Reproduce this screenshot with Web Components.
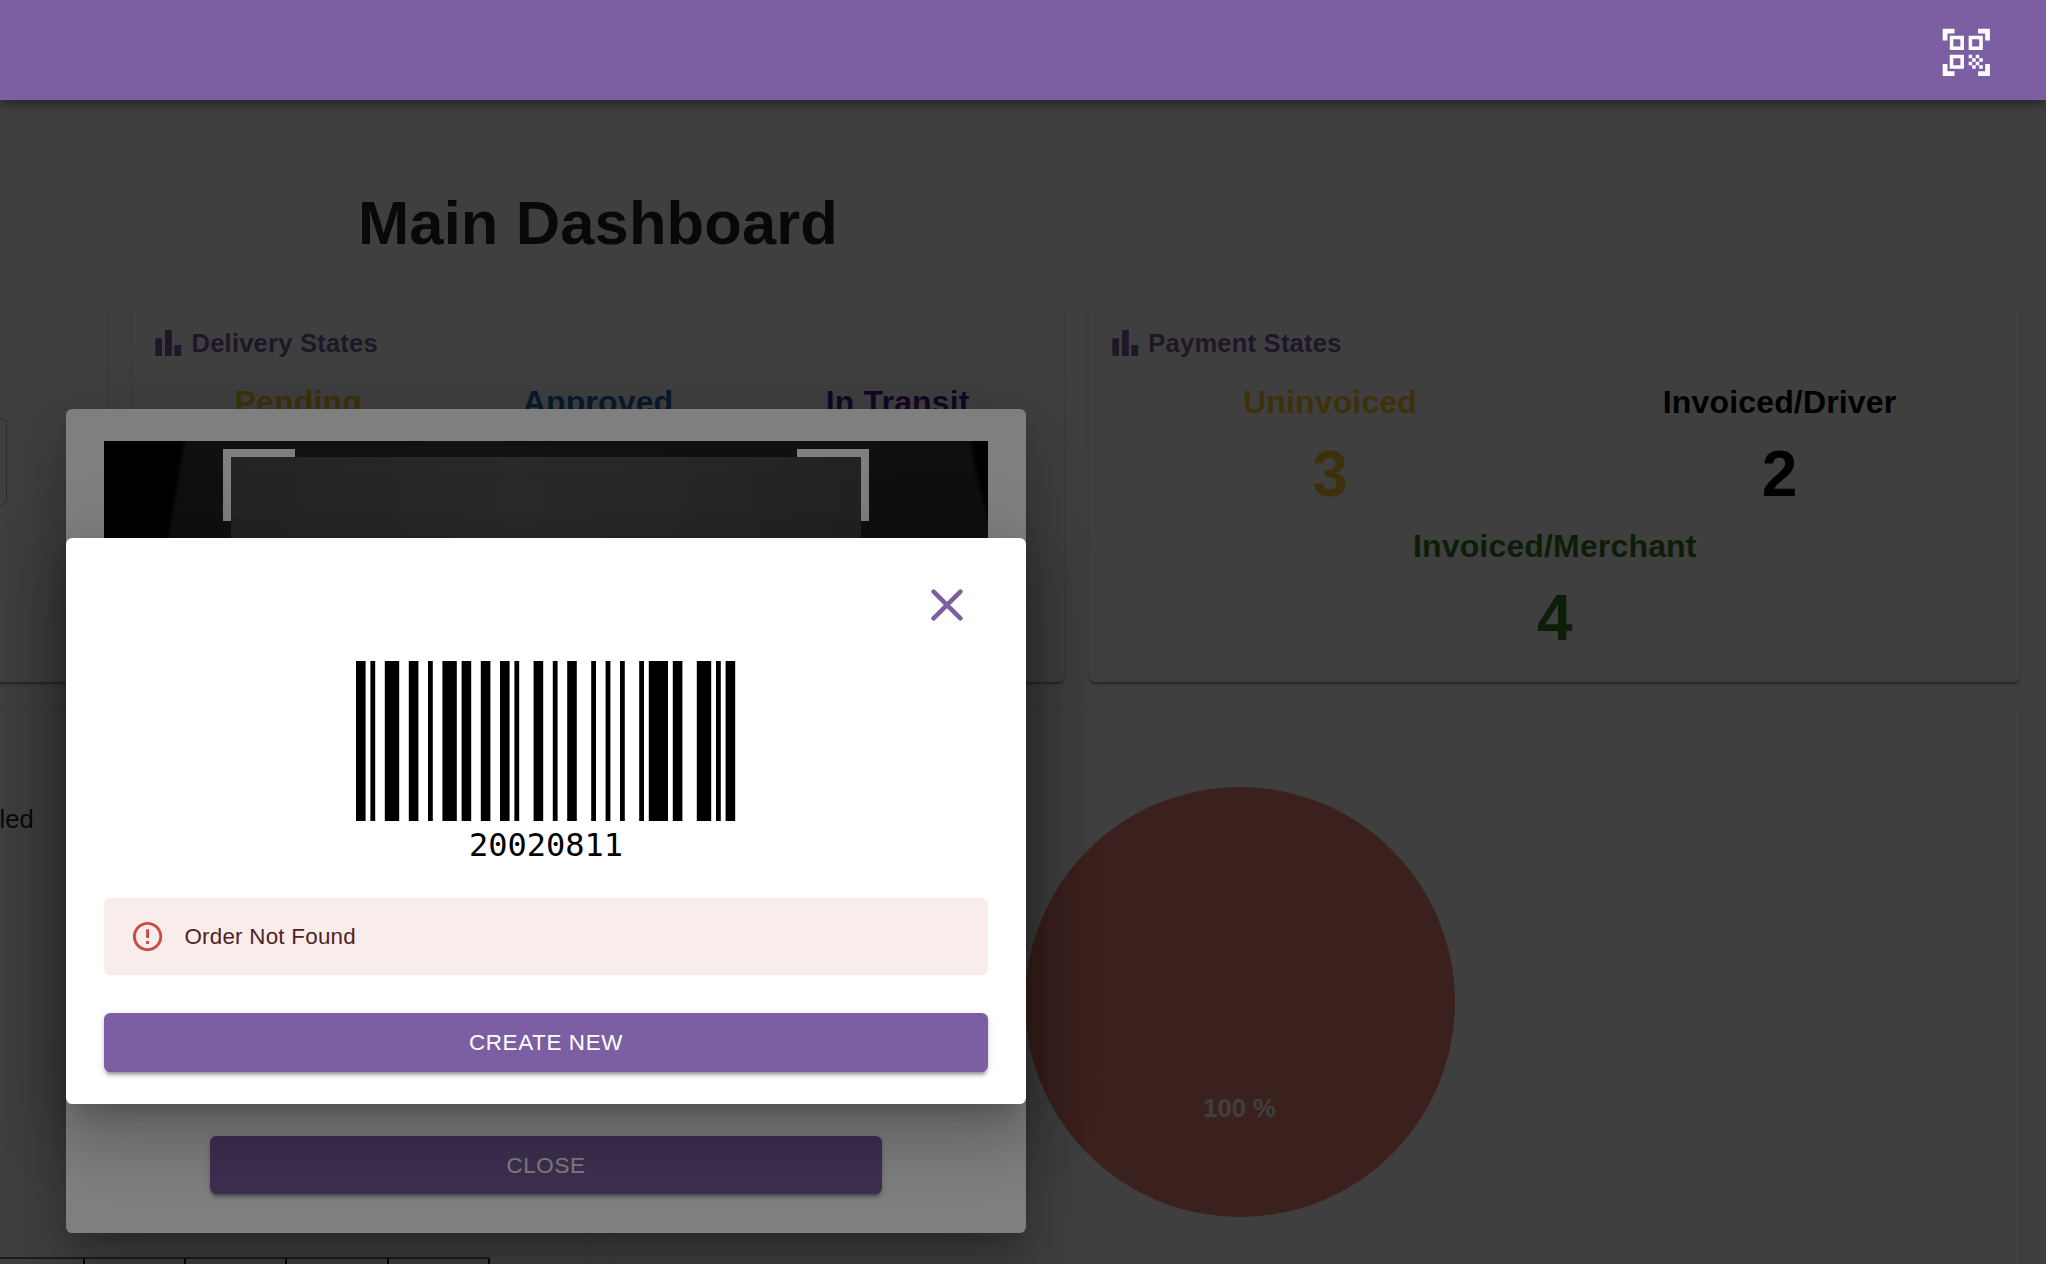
<!DOCTYPE html>
<html lang="en">
<head>
<meta charset="utf-8">
<title>Main Dashboard</title>
<style>
html,body{margin:0;height:100%;overflow:hidden}
body{font-family:"Liberation Sans",Arial,sans-serif;background:#fff}
</style>
</head>
<body>
<dash-app></dash-app>
<script>
const define = (name, html) => customElements.define(name, class extends HTMLElement {
  constructor() {
    super();
    this.attachShadow({ mode: 'open' }).innerHTML = typeof html === 'function' ? html(this) : html;
  }
});

define('app-bar', `<style>
:host{display:flex;align-items:center;justify-content:flex-end;position:relative;z-index:10;height:100px;box-sizing:border-box;padding:4px 51.500px 0 0;background:#7c5fa2;
box-shadow:0 3.2px 6.4px -1.6px rgba(0,0,0,.2),0 6.4px 8px 0 rgba(0,0,0,.14),0 1.6px 16px 0 rgba(0,0,0,.12)}
svg{width:56.6px;height:56.6px;fill:#fff;display:block}
</style>
<svg viewBox="0 0 24 24"><path d="M9.5 6.5v3h-3v-3h3M11 5H5v6h6V5zm-1.500 9.500v3h-3v-3h3M11 13H5v6h6v-6zm6.500-6.500v3h-3v-3h3M19 5h-6v6h6V5zm-6 8h1.500v1.500H13V13zm1.500 1.500H16V16h-1.500v-1.500zM16 13h1.500v1.500H16V13zm-3 3h1.500v1.500H13V16zm1.500 1.500H16V19h-1.500v-1.500zM16 16h1.500v1.500H16V16zm1.500-1.500H19V16h-1.500v-1.500zm0 3H19V19h-1.500v-1.500zM22 7h-2V4h-3V2h5v5zm0 15v-5h-2v3h-3v2h5zM2 22h5v-2H4v-3H2v5zM2 2v5h2V4h3V2H2z"/></svg>`);

define('paper-card', `<style>
:host{display:block;box-sizing:border-box;flex:1 1 0;min-width:0;background:#fff;border-radius:6.4px;
box-shadow:0 3.2px 1.6px -1.6px rgba(0,0,0,.2),0 1.6px 1.6px 0 rgba(0,0,0,.14),0 1.6px 4.8px 0 rgba(0,0,0,.12)}
</style><slot></slot>`);

define('card-heading', `<style>
:host{display:flex;align-items:center;gap:4px;height:38px;margin:0 0 14px .700px;color:#7c5fa2;font:bold 25.6px/38px "Liberation Sans",Arial,sans-serif;letter-spacing:.0075em}
svg{width:38.4px;height:38px;fill:currentColor;flex:none}
</style>
<svg viewBox="0 0 38.4 38"><path d="M6.300 14.200h6.700v17.800h-6.700zM16 6h6.800v26H16zM25.400 21h6.800v11h-6.800z"/></svg><span><slot></slot></span>`);

define('stat-item', el => `<style>
:host{display:flex;flex-direction:column;align-items:center;font-weight:bold;letter-spacing:.01em}
.l{font-size:32px;line-height:52px}.n{font-size:64px;line-height:89.700px;padding-top:2px;letter-spacing:0}
</style><span class="l">${el.getAttribute('label')}</span><span class="n"><slot></slot></span>`);

define('pie-chart', `<style>
:host{display:block;padding:79px 0 0 414.200px}
svg{display:block;width:430px;height:430px}
text{font:bold 25.600px "Liberation Sans",Arial,sans-serif;fill:#fff}
</style><svg viewBox="0 0 430 430"><circle cx="215" cy="215" r="215" fill="#ee8478"/><text x="214.500" y="330" text-anchor="middle">100 %</text></svg>`);

define('order-table', `<style>
:host{display:flex;border-top:2px solid #707070}
i{display:block;width:99.400px;height:80px;border-right:2px solid #000}
</style>` + '<i></i>'.repeat(6));

define('mui-button', `<style>
:host{display:block;box-sizing:border-box;height:58.400px;border-radius:6.400px;background:#7c5fa2;color:#fff;text-align:center;text-transform:uppercase;font-size:22.400px;line-height:59px;letter-spacing:.02857em;
box-shadow:0 4.800px 1.600px -3.200px rgba(0,0,0,.2),0 3.200px 3.200px 0 rgba(0,0,0,.14),0 1.600px 8px 0 rgba(0,0,0,.12)}
</style><slot></slot>`);

define('error-alert', `<style>
:host{display:flex;align-items:center;box-sizing:border-box;height:77px;padding-left:26px;gap:19.200px;border-radius:6.400px;background:#f9edeb;color:#53211f;font-size:22.400px;letter-spacing:.01071em}
svg{width:35.200px;height:35.200px;fill:#cb4c46;flex:none}
</style><svg viewBox="0 0 24 24"><path d="M11 15h2v2h-2zm0-8h2v6h-2zm.99-5C6.470 2 2 6.480 2 12s4.470 10 9.990 10C17.520 22 22 17.520 22 12S17.520 2 11.990 2zM12 20c-4.420 0-8-3.580-8-8s3.580-8 8-8 8 3.580 8 8-3.580 8-8 8z"/></svg><span><slot></slot></span>`);

const bars = [[0,2],[3,1],[6,3],[11,2],[15,1],[18,3],[22,2],[26,2],[30,2],[33,1],[37,2],[41,1],[44,2],[49,1],[52,1],[55,1],[59,1],[61,4],[66,2],[71,3],[75,1],[77,2]];
define('bar-code', `<style>
:host{display:flex;flex-direction:column;align-items:center}
svg{display:block;width:379.200px;height:160px}
span{font:32px/38px "DejaVu Sans Mono",monospace;color:#000;margin-top:4.500px}
</style><svg viewBox="0 0 79 100" preserveAspectRatio="none">${bars.map(([x,w]) => `<rect x="${x}" width="${w}" height="100"/>`).join('')}</svg><span><slot></slot></span>`);

define('camera-view', `<style>
:host{display:block;height:657px}svg{display:block;width:100%;height:100%}
</style><svg viewBox="0 0 884 657" preserveAspectRatio="none">
<defs>
<linearGradient id="o"><stop offset="0" stop-color="#1d2020"/><stop offset=".4" stop-color="#242422"/><stop offset=".7" stop-color="#1e2222"/><stop offset="1" stop-color="#1e1e1d"/></linearGradient>
<linearGradient id="f"><stop offset="0" stop-color="#464745"/><stop offset=".45" stop-color="#535250"/><stop offset=".75" stop-color="#4d4d49"/><stop offset="1" stop-color="#424442"/></linearGradient>
<filter id="b"><feGaussianBlur stdDeviation="2"/></filter>
</defs>
<rect width="884" height="657" fill="url(#o)"/>
<path filter="url(#b)" fill="#060606" d="M-8-8H82L64 97 40 240V670H-8z"/>
<path filter="url(#b)" fill="#040404" d="M866-8h30v90h-10Q870 30 866-8z"/>
<rect x="127" y="16" width="630" height="630" fill="url(#f)"/>
<path fill="none" stroke="#fff" stroke-width="8" d="M191 12H123V80M693 12h68V80"/>
</svg>`);

define('modal-layer', `<style>
:host{display:block;position:absolute;inset:0;background:rgba(0,0,0,.5);z-index:2}
section{position:absolute;left:66px;width:960px;top:var(--top);height:var(--h);box-sizing:border-box;padding:var(--pad);background:#fff;border-radius:6.400px;
box-shadow:0 17.600px 24px -11.200px rgba(0,0,0,.2),0 38.400px 60.800px 4.800px rgba(0,0,0,.14),0 14.400px 73.600px 12.800px rgba(0,0,0,.12)}
</style><section><slot></slot></section>`);

define('close-icon', `<style>
:host{display:flex;justify-content:flex-end;padding-right:25px;margin-bottom:40px}
svg{width:32px;height:32px;display:block}
</style><svg viewBox="0 0 32 32"><path d="M2.600 2.600l26.800 26.800M29.400 2.600L2.600 29.400" fill="none" stroke="#7c5fa2" stroke-width="4.500" stroke-linecap="round"/></svg>`);

define('dash-app', `<style>
:host{display:block;position:relative;width:2046px;height:1264px;overflow:hidden;background:#fff}
main{width:2844.800px;margin-left:-824.400px;padding-top:87px}
h1{margin:0 0 48px;text-align:center;font-size:61.440px;line-height:72px;letter-spacing:.15px;color:rgba(0,0,0,.87)}
.row{display:flex;gap:25.600px;margin-bottom:25.600px}
.top{height:375px;padding:17px 16px 0}
.stats{display:flex;flex-wrap:wrap}
.stats>*{flex:0 0 33.333%}.two>*{flex-basis:50%}.two>.full{flex-basis:100%}
.field{width:380px;height:88.600px;box-sizing:border-box;border:1.600px solid rgba(0,0,0,.3);border-radius:6.400px;margin:93.500px 83.500px 0 auto}
.bottom{height:620px}
.col{display:flex;flex-direction:column;align-items:flex-end}
.led{margin:91px 551.500px 0 0;font-size:25.600px;line-height:40px;color:rgba(0,0,0,.87)}
order-table{margin:418px 95px 0 0}
.scan{--top:409px;--h:824px;--pad:32px 38px}
.scan mui-button{width:672px;margin:38px auto 0}
.found{--top:538px;--h:566px;--pad:51px 38px 32px}
error-alert{margin:34.500px 0 38.400px}
</style>
<app-bar></app-bar>
<main>
  <h1>Main Dashboard</h1>
  <div class="row">
    <paper-card class="top"><div class="field"></div></paper-card>
    <paper-card class="top">
      <card-heading>Delivery States</card-heading>
      <div class="stats">
        <stat-item label="Pending" style="color:#f4c430"></stat-item>
        <stat-item label="Approved" style="color:#2468bc"></stat-item>
        <stat-item label="In Transit" style="color:#551a8b"></stat-item>
      </div>
    </paper-card>
    <paper-card class="top">
      <card-heading>Payment States</card-heading>
      <div class="stats two">
        <stat-item label="Uninvoiced" style="color:#f4c430">3</stat-item>
        <stat-item label="Invoiced/Driver" style="color:#000">2</stat-item>
        <stat-item class="full" label="Invoiced/Merchant" style="color:#307a20">4</stat-item>
      </div>
    </paper-card>
  </div>
  <div class="row">
    <paper-card class="bottom"><div class="col"><div class="led">led</div><order-table></order-table></div></paper-card>
    <paper-card class="bottom"><pie-chart></pie-chart></paper-card>
  </div>
</main>
<modal-layer class="scan"><camera-view></camera-view><mui-button>Close</mui-button></modal-layer>
<modal-layer class="found">
  <close-icon></close-icon>
  <bar-code>20020811</bar-code>
  <error-alert>Order Not Found</error-alert>
  <mui-button>Create New</mui-button>
</modal-layer>`);
</script>
</body>
</html>
